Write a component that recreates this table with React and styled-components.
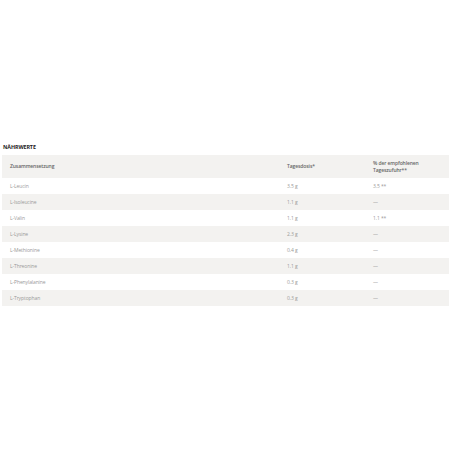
import React from 'react'
import styled, { createGlobalStyle } from 'styled-components'

const Global = createGlobalStyle`
  html, body {
    margin: 0;
    padding: 0;
    background: #fff;
    font-family: "Open Sans", "Noto Sans", sans-serif;
  }
`

const Page = styled.div`
  width: 450px;
  height: 450px;
  box-sizing: border-box;
  padding: 144px 1px 0 2px;
`

const Title = styled.h3`
  margin: 0 0 5px 1px;
  font-size: 5.4px;
  line-height: 6px;
  font-weight: 700;
  color: #222;
  letter-spacing: -0.1px;
`

const Table = styled.div`
  display: grid;
  grid-template-columns: 277px 86px 1fr;
`

const Cell = styled.div`
  display: flex;
  align-items: center;
  height: ${p => (p.head ? '23px' : '16px')};
  padding-left: 8px;
  background: ${p => (p.shade ? '#f3f2f0' : '#fff')};
  font-size: 5px;
  line-height: 7px;
  letter-spacing: -0.1px;
  color: ${p => (p.head ? '#666' : '#999')};
  font-weight: ${p => (p.head ? 600 : 400)};
`

const rows = [
  ['L-Leucin', '3.5 g', '3.5 **'],
  ['L-Isoleucine', '1.1 g', '—'],
  ['L-Valin', '1.1 g', '1.1 **'],
  ['L-Lysine', '2.3 g', '—'],
  ['L-Methionine', '0.4 g', '—'],
  ['L-Threonine', '1.1 g', '—'],
  ['L-Phenylalanine', '0.3 g', '—'],
  ['L-Tryptophan', '0.3 g', '—'],
]

export default function App() {
  return (
    <Page>
      <Global />
      <Title>NÄHRWERTE</Title>
      <Table>
        <Cell head shade>Zusammensetzung</Cell>
        <Cell head shade>Tagesdosis*</Cell>
        <Cell head shade>% der empfohlenen<br />Tageszufuhr**</Cell>
        {rows.map((r, i) =>
          r.map((c, j) => (
            <Cell key={i + '-' + j} shade={i % 2 === 1}>{c}</Cell>
          ))
        )}
      </Table>
    </Page>
  )
}
